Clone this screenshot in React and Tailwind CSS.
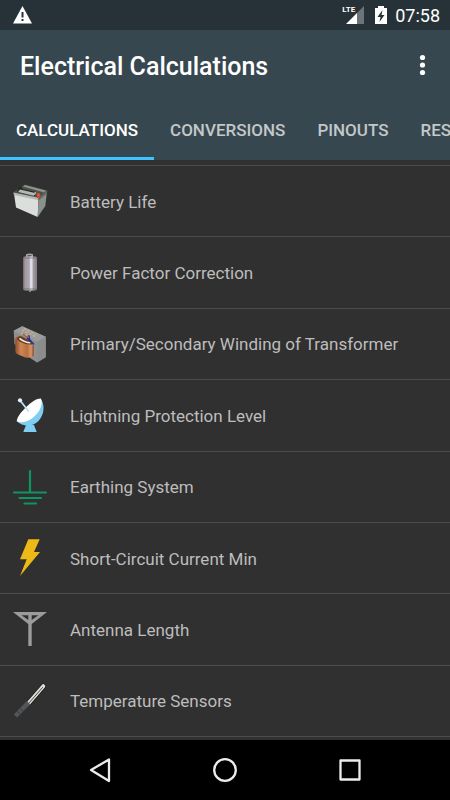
import { useState } from 'react';

const BatteryIcon = () => (
  <svg className="size-9 overflow-visible" viewBox="0 0 36 36" aria-hidden="true">
    <path fill="#4b504b" d="M1 9.5 12.5 1.5 35.5 7.5 26.5 15.5z" />
    <path fill="#8d928c" d="M13 2 34 7.5 32 9.5 11 3.5z" />
    <path fill="#dcdedb" d="M2 10.5 26.5 16 25.7 34 4 24.5z" />
    <path fill="#b5b9b4" d="M1.5 9.5 26.5 14.8 26.4 17.2 1.8 12z" />
    <path fill="#8a918a" d="M26.5 15.5 35 8 33.3 23 25.7 34z" />
    <path fill="#626963" d="m26.5 14.8 8.8-7.2-.3 3-8.5 7.2z" />
    <path fill="#252725" d="m5 9 2-4.5L10 4l.3 2 14 3-1.5 4z" />
    <path fill="#b4b8b2" d="m8 6.5 14 3.3 2.5-1.2-.8 2.5-2 1.7L6 9z" />
    <path fill="#d8412c" d="M25.2 11.5h2.4l.4 3.5h-3.2z" />
    <circle cx="26.4" cy="11.7" r="1.7" fill="#ee4b34" />
  </svg>
);

const CapacitorIcon = () => (
  <svg className="size-9 overflow-visible" viewBox="0 0 36 36" aria-hidden="true">
    <defs>
      <linearGradient id="can">
        <stop offset="0" stopColor="#6f666b" />
        <stop offset=".15" stopColor="#a39a9f" />
        <stop offset=".45" stopColor="#b0a8ae" />
        <stop offset=".55" stopColor="#e2e2f0" />
        <stop offset=".65" stopColor="#dcdcea" />
        <stop offset=".72" stopColor="#a69da2" />
        <stop offset="1" stopColor="#857c81" />
      </linearGradient>
    </defs>
    <path fill="#a8a4a4" d="M14-.8Q17.5-2 21-.8V2h-7z" />
    <path fill="#4a4747" d="M15.5.2h4v1.2h-4z" />
    <path fill="url(#can)" d="M11 3q0-1.5 1.5-1.5h11Q25 1.5 25 3v30.5q0 2-2 2H13q-2 0-2-2z" />
    <path stroke="#6a6266" strokeWidth=".7" d="M11 3h14M11.3 34h13.4" />
    <path fill="#a8a4a4" d="M17 35.5h2v1.3h-2z" />
  </svg>
);

const TransformerIcon = () => (
  <svg className="size-9 overflow-visible" viewBox="0 0 36 36" aria-hidden="true">
    <defs>
      <linearGradient id="copper">
        <stop offset="0" stopColor="#8f4d2b" />
        <stop offset=".3" stopColor="#cf8656" />
        <stop offset=".65" stopColor="#b9703f" />
        <stop offset=".85" stopColor="#d9976a" />
        <stop offset="1" stopColor="#8a4a2a" />
      </linearGradient>
    </defs>
    <path fill="#8f9190" d="m1.7 4.7 8.6-4.4 23.4 10.4v20.6L25 36.5l-6-4L2.5 18z" />
    <path fill="#9a9c9b" d="m1.7 4.7 8.6-4.4 23.4 10.4-8.5 5z" />
    <path fill="#8b8d8c" d="m25.2 15.7 8.5-5v20.6L25 36.5z" />
    <path
      fill="none"
      stroke="#c9b78f"
      strokeWidth="1.2"
      strokeDasharray="2.5 1.5"
      d="m10 4 14 7M12 2.5l12 6M9 7l9 4"
    />
    <path
      fill="url(#copper)"
      d="M3.3 14q0-4 4-3.3L17 16q5 2.3 4.7 5v9q-4 2.7-9 1.2L5 28q-1.7-1-1.7-3z"
    />
    <path fill="#653b22" d="M5 13q1-4 5-2.5l9 5.3q2 2 .5 2.6-6 .4-12-3z" />
    <path fill="none" stroke="#f0e8dc" strokeWidth="1.6" d="M7.5 12.3q5 4.2 10.8 4.5" />
    <path fill="none" stroke="#c04a34" strokeWidth="1.2" d="m11 8 4 3.5 2-2.5" />
    <path fill="none" stroke="#1c2c9c" strokeWidth="1.3" d="m17 9.5.5 4 4.5 5M15 12l3.5 3.5" />
  </svg>
);

const DishIcon = () => (
  <svg className="size-9 overflow-visible" viewBox="0 0 36 36" aria-hidden="true">
    <path fill="#7fcdf1" d="M14 28h8l2.7 7H11.3z" />
    <path fill="#7fcdf1" d="M28.5 1.5C33.5 8 32 18 26.5 24 20.5 30 11 30 4.7 24.3z" />
    <path
      fill="#fff"
      d="M28.7 1.5C31.5 5.5 28.5 15 20.5 21 14.5 25.5 7.5 26.5 4.7 24c.8-5 5.3-10 10.300-14.800C19.5 5 24.5 1.5 28.7 1.5z"
    />
    <path stroke="#b7e3f7" strokeWidth="1.8" d="m8.5 4 8.3 10.5" />
    <circle cx="8" cy="3.3" r="2.1" fill="#dff3fc" />
  </svg>
);

const EarthIcon = () => (
  <svg className="size-9" viewBox="0 0 36 36" aria-hidden="true">
    <path
      fill="none"
      stroke="#0d9562"
      strokeWidth="2.2"
      strokeLinecap="round"
      d="M18 2v21M2 23.5h32M7.5 29h21.5M12.5 34.5h11.5"
    />
  </svg>
);

const BoltIcon = () => (
  <svg className="size-9 overflow-visible" viewBox="0 0 36 36" aria-hidden="true">
    <path fill="#edb917" d="M16.3-.8h11.4L22 12h6L8 36l6.7-16.8H8z" />
  </svg>
);

const AntennaIcon = () => (
  <svg className="size-9" viewBox="0 0 36 36" aria-hidden="true">
    <path
      fill="#9c9c9c"
      fillRule="evenodd"
      d="M1 1h34L19.7 13v22h-3.4V13zM9.5 4.2l6.8 4.8V4.2zM26.5 4.2l-6.8 4.8V4.2z"
    />
  </svg>
);

const ProbeIcon = () => (
  <svg className="size-9" viewBox="0 0 36 36" aria-hidden="true" strokeLinecap="round">
    <path stroke="#151515" strokeWidth="5.2" d="M17 19.8 31.3 3.2" />
    <path stroke="#deded8" strokeWidth="4" d="M16.5 20.3 31.3 3.2" />
    <path stroke="#4a4a46" strokeWidth="1" d="M17 20 30.5 4.5" />
    <path stroke="#50565a" strokeWidth="4.6" strokeLinecap="butt" d="m3.5 33 13-13.3" />
    <path stroke="#34383a" strokeWidth="1" d="m5.5 28.5 3 3M8.5 25.8l3 3" />
  </svg>
);

const tabs = ['CALCULATIONS', 'CONVERSIONS', 'PINOUTS', 'RESOURCES'];

const items = [
  { label: 'Battery Life', Icon: BatteryIcon },
  { label: 'Power Factor Correction', Icon: CapacitorIcon },
  { label: 'Primary/Secondary Winding of Transformer', Icon: TransformerIcon },
  { label: 'Lightning Protection Level', Icon: DishIcon },
  { label: 'Earthing System', Icon: EarthIcon },
  { label: 'Short-Circuit Current Min', Icon: BoltIcon },
  { label: 'Antenna Length', Icon: AntennaIcon },
  { label: 'Temperature Sensors', Icon: ProbeIcon },
];

const StatusBar = () => (
  <div className="flex h-[30px] items-center bg-[#263238] pl-3 pr-2.5 text-white">
    <svg className="h-5 w-5" viewBox="0 0 20 20" aria-hidden="true">
      <path
        fill="#fff"
        fillRule="evenodd"
        d="M10.5 1 20 18.5H1zM9.5 7v5.5h2V7zm0 7v2h2v-2z"
      />
    </svg>
    <div className="ml-auto flex items-center">
      <div className="flex">
        <span className="text-[8px] font-bold leading-[10px]">LTE</span>
        <svg className="-ml-2.5 h-5 w-5" viewBox="0 0 20 20" aria-hidden="true">
          <path fill="#6b7579" d="M19 1v18h-7V8z" />
          <path fill="#fff" d="M12 8v11H1z" />
        </svg>
      </div>
      <svg className="ml-2 h-5 w-4" viewBox="0 0 16 20" aria-hidden="true">
        <path
          fill="#fff"
          fillRule="evenodd"
          d="M5 1h6v2h3v16H2V3h3zM9.5 5 4.5 12h3l-1 5 5-7h-3z"
        />
      </svg>
      <span className="ml-1.5 pt-px text-lg leading-5">07:58</span>
    </div>
  </div>
);

const NavBar = () => (
  <nav className="flex h-[60px] items-center justify-center gap-[89px] bg-black text-[#ececec]">
    <button type="button" aria-label="Back">
      <svg className="size-9" viewBox="0 0 36 36" fill="none" stroke="currentColor" strokeWidth="2.3" strokeLinejoin="round">
        <path d="M27 7.5v21.5L9 18z" />
      </svg>
    </button>
    <button type="button" aria-label="Home">
      <svg className="size-9" viewBox="0 0 36 36" fill="none" stroke="currentColor" strokeWidth="2.3">
        <circle cx="18" cy="18" r="10.8" />
      </svg>
    </button>
    <button type="button" aria-label="Recent apps">
      <svg className="size-9" viewBox="0 0 36 36" fill="none" stroke="currentColor" strokeWidth="2.3" strokeLinejoin="round">
        <path d="M8.5 8.5h19v19h-19z" />
      </svg>
    </button>
  </nav>
);

const App = () => {
  const [active, setActive] = useState(tabs[0]);

  return (
    <div className="flex min-h-screen flex-col overflow-hidden bg-[#303030] font-[Roboto,sans-serif]">
      <StatusBar />

      <header className="bg-[#37474f]">
        <div className="flex h-[72px] items-center justify-between pl-5 pr-3">
          <h1 className="pt-px text-[25px] leading-8 font-medium text-white">
            Electrical Calculations
          </h1>
          <button type="button" aria-label="More options" className="flex h-8 w-8 justify-center">
            <svg className="h-8 w-6" viewBox="0 0 24 32" fill="#fff">
              <circle cx="12.5" cy="7.5" r="2.6" />
              <circle cx="12.5" cy="15" r="2.6" />
              <circle cx="12.5" cy="22.5" r="2.6" />
            </svg>
          </button>
        </div>
        <div role="tablist" className="flex overflow-hidden">
          {tabs.map((tab) => (
            <button
              key={tab}
              type="button"
              role="tab"
              aria-selected={tab === active}
              onClick={() => setActive(tab)}
              className={`h-[58px] shrink-0 border-b-3 px-4 pt-0.5 text-[17px] font-medium ${
                tab === active ? 'border-[#40c4ff] text-white' : 'border-transparent text-[#c3c8ca]'
              }`}
            >
              {tab}
            </button>
          ))}
        </div>
      </header>

      <main className="flex flex-1 flex-col pt-[5px] pb-[3px]">
        <ul className="flex flex-1 flex-col border-t border-[#4c4c4c]">
          {items.map(({ label, Icon }) => (
            <li key={label} className="flex min-h-[71px] flex-1 border-b border-[#4c4c4c]">
              <button type="button" className="flex flex-1 items-center gap-[22px] px-3 text-left">
                <Icon />
                <span className="pt-px text-[17px] leading-6 text-[#bdbdbd]">{label}</span>
              </button>
            </li>
          ))}
        </ul>
      </main>

      <NavBar />
    </div>
  );
};

export default App;
